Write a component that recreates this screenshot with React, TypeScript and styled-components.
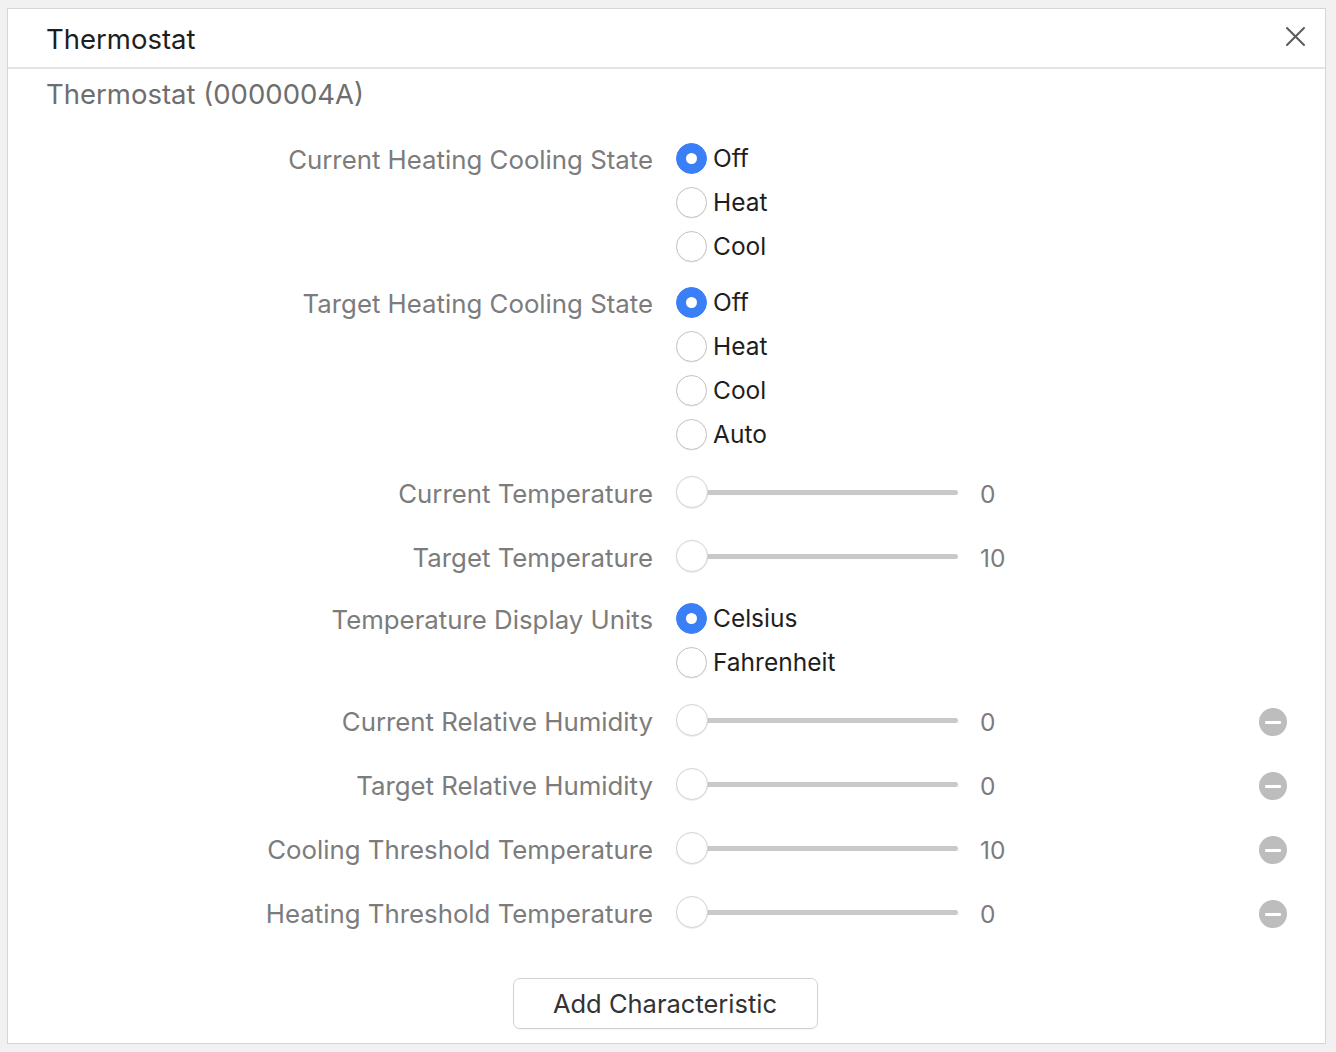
import React from "react";
import styled, { createGlobalStyle } from "styled-components";

const Global = createGlobalStyle`
  html, body { margin: 0; padding: 0; background: #f1f1f1; }
  body { font-family: Inter, "Noto Sans", sans-serif; -webkit-font-smoothing: antialiased; }
`;

const Page = styled.div`
  padding: 8px 10px 8px 7px;
  height: 1052px;
  box-sizing: border-box;
`;

const Panel = styled.div`
  background: #fff;
  border: 1px solid #d6d6d6;
  height: 1036px;
  box-sizing: border-box;
  display: flex;
  flex-direction: column;
`;

const Header = styled.div`
  height: 60px;
  border-bottom: 2px solid #e4e4e4;
  display: flex;
  align-items: center;
  justify-content: space-between;
  padding: 0 18px 0 38px;
  box-sizing: border-box;
`;

const Title = styled.div`
  font-size: 27.5px;
  color: #1e1e1e;
  margin-top: 2px;
`;

const CloseBtn = styled.button`
  border: none;
  background: none;
  padding: 0;
  width: 24px;
  height: 24px;
  display: flex;
  align-items: center;
  justify-content: center;
  margin-top: -3px;
`;

const Subtitle = styled.div`
  font-size: 27.5px;
  color: #6e6e6e;
  padding: 8px 0 0 38px;
  height: 48px;
`;

const Body = styled.div`
  display: flex;
  flex-direction: column;
  gap: 12px;
  padding: 11px 38px 0 0;
`;

const Row = styled.div`
  display: grid;
  grid-template-columns: 645px 1fr 28px;
  column-gap: 23px;
  align-items: start;
`;

const Label = styled.div<{ $h: number }>`
  text-align: right;
  font-size: 25.8px;
  color: #7c7c7c;
  line-height: ${(p) => p.$h}px;
  white-space: nowrap;
`;

const RadioList = styled.div`
  display: flex;
  flex-direction: column;
`;

const RadioItem = styled.label`
  height: 44px;
  display: flex;
  align-items: center;
  gap: 6px;
  font-size: 24.5px;
  color: #1e1e1e;
`;

const RadioCircle = styled.span<{ $on: boolean }>`
  width: 31px;
  height: 31px;
  border-radius: 50%;
  box-sizing: border-box;
  display: flex;
  align-items: center;
  justify-content: center;
  background: ${(p) => (p.$on ? "#3a7ff5" : "#fff")};
  border: 1px solid ${(p) => (p.$on ? "#3a7ff5" : "#c4c4c4")};
  box-shadow: ${(p) => (p.$on ? "none" : "0 0.5px 1px rgba(0,0,0,0.08)")};
  &::after {
    content: "";
    display: ${(p) => (p.$on ? "block" : "none")};
    width: 11px;
    height: 11px;
    border-radius: 50%;
    background: #fff;
  }
`;

const SliderWrap = styled.div`
  height: 52px;
  display: flex;
  align-items: center;
  gap: 22px;
`;

const Track = styled.div`
  position: relative;
  width: 282px;
  height: 32px;
  margin-top: -4px;
  display: flex;
  align-items: center;
`;

const TrackLine = styled.div`
  flex: 1;
  height: 5px;
  border-radius: 3px;
  background: #c9c9c9;
  margin-left: 8px;
`;

const Thumb = styled.div`
  position: absolute;
  left: 0;
  top: 0;
  width: 32px;
  height: 32px;
  border-radius: 50%;
  background: #fff;
  box-sizing: border-box;
  border: 1px solid #d6d6d6;
  box-shadow: 0 0.5px 1.5px rgba(0, 0, 0, 0.12);
`;

const Value = styled.div`
  font-size: 24.5px;
  color: #7c7c7c;
`;

const MinusSlot = styled.div`
  height: 52px;
  display: flex;
  align-items: center;
`;

const MinusBtn = styled.button`
  width: 28px;
  height: 28px;
  border-radius: 50%;
  background: #bdbdbd;
  border: none;
  padding: 0;
  display: flex;
  align-items: center;
  justify-content: center;
  &::after {
    content: "";
    width: 16px;
    height: 3px;
    border-radius: 1px;
    background: #fff;
  }
`;

const Footer = styled.div`
  display: flex;
  justify-content: center;
  padding-top: 38px;
  padding-right: 3px;
`;

const AddButton = styled.button`
  width: 305px;
  height: 51px;
  border: 1px solid #d2d2d2;
  border-radius: 7px;
  background: #fff;
  font-family: Inter, "Noto Sans", sans-serif;
  font-size: 25.5px;
  color: #333;
  box-shadow: 0 1px 1px rgba(0, 0, 0, 0.04);
`;

type RadioRowProps = { label: string; options: string[]; selected: number };

const RadioRow = ({ label, options, selected }: RadioRowProps) => (
  <Row>
    <Label $h={48}>{label}</Label>
    <RadioList>
      {options.map((o, i) => (
        <RadioItem key={o}>
          <RadioCircle $on={i === selected} />
          {o}
        </RadioItem>
      ))}
    </RadioList>
    <div />
  </Row>
);

type SliderRowProps = { label: string; value: number; removable?: boolean };

const SliderRow = ({ label, value, removable }: SliderRowProps) => (
  <Row>
    <Label $h={52}>{label}</Label>
    <SliderWrap>
      <Track>
        <TrackLine />
        <Thumb />
      </Track>
      <Value>{value}</Value>
    </SliderWrap>
    <MinusSlot>{removable && <MinusBtn aria-label="Remove" />}</MinusSlot>
  </Row>
);

export default function App() {
  return (
    <Page>
      <Global />
      <Panel>
        <Header>
          <Title>Thermostat</Title>
          <CloseBtn aria-label="Close">
            <svg width="21" height="21" viewBox="0 0 21 21">
              <path d="M2 2 L19 19 M19 2 L2 19" stroke="#5a5a5a" strokeWidth="2" strokeLinecap="round" />
            </svg>
          </CloseBtn>
        </Header>
        <Subtitle>Thermostat (0000004A)</Subtitle>
        <Body>
          <RadioRow label="Current Heating Cooling State" options={["Off", "Heat", "Cool"]} selected={0} />
          <RadioRow label="Target Heating Cooling State" options={["Off", "Heat", "Cool", "Auto"]} selected={0} />
          <SliderRow label="Current Temperature" value={0} />
          <SliderRow label="Target Temperature" value={10} />
          <RadioRow label="Temperature Display Units" options={["Celsius", "Fahrenheit"]} selected={0} />
          <SliderRow label="Current Relative Humidity" value={0} removable />
          <SliderRow label="Target Relative Humidity" value={0} removable />
          <SliderRow label="Cooling Threshold Temperature" value={10} removable />
          <SliderRow label="Heating Threshold Temperature" value={0} removable />
        </Body>
        <Footer>
          <AddButton>Add Characteristic</AddButton>
        </Footer>
      </Panel>
    </Page>
  );
}
